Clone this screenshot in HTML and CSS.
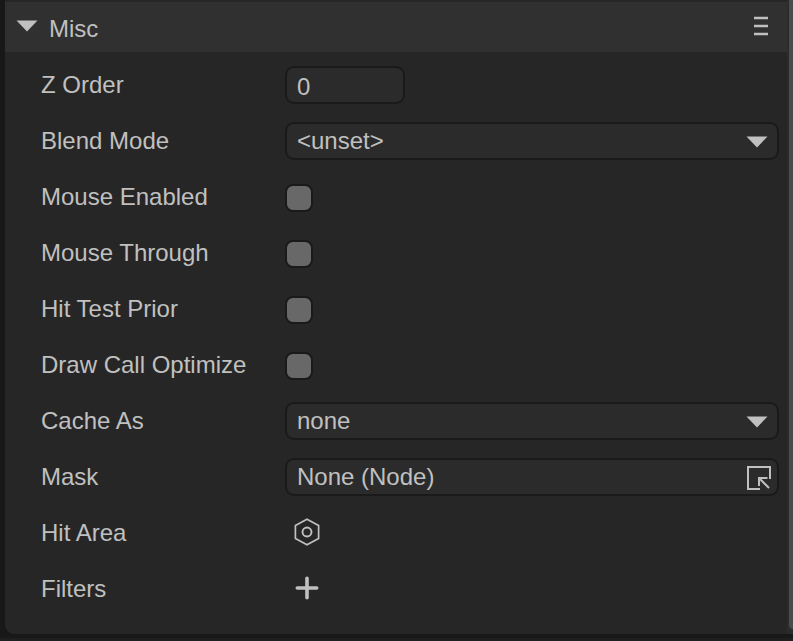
FILE: index.html
```html
<!DOCTYPE html>
<html lang="en">
<head>
<meta charset="utf-8">
<title>Misc</title>
<link rel="stylesheet" href="styles.css">
</head>
<body>
<div class="inspector">
  <main class="panel">
    <header class="panel-header">
      <button class="toggle" type="button" aria-expanded="true">
        <svg class="caret" width="22" height="12" viewBox="0 0 22 12" aria-hidden="true"><path d="M0.5 0.5H21.5L11 11.5Z"/></svg>
        <span class="title">Misc</span>
      </button>
      <button class="icon-button" type="button" aria-label="Menu">
        <svg width="16" height="20" viewBox="0 0 16 20" aria-hidden="true"><path class="line" stroke-width="2.4" d="M1 2H15M1 10H15M1 18H15"/></svg>
      </button>
    </header>
    <form class="rows">
      <div class="row">
        <label for="z-order">Z Order</label>
        <input class="field number" id="z-order" type="text" inputmode="numeric" value="0">
      </div>
      <div class="row">
        <label for="blend-mode">Blend Mode</label>
        <div class="select">
          <select class="field" id="blend-mode"><option>&lt;unset&gt;</option></select>
          <svg class="caret" width="22" height="12" viewBox="0 0 22 12" aria-hidden="true"><path d="M0.5 0.5H21.5L11 11.5Z"/></svg>
        </div>
      </div>
      <div class="row">
        <label for="mouse-enabled">Mouse Enabled</label>
        <input class="check" id="mouse-enabled" type="checkbox">
      </div>
      <div class="row">
        <label for="mouse-through">Mouse Through</label>
        <input class="check" id="mouse-through" type="checkbox">
      </div>
      <div class="row">
        <label for="hit-test-prior">Hit Test Prior</label>
        <input class="check" id="hit-test-prior" type="checkbox">
      </div>
      <div class="row">
        <label for="draw-call">Draw Call Optimize</label>
        <input class="check" id="draw-call" type="checkbox">
      </div>
      <div class="row">
        <label for="cache-as">Cache As</label>
        <div class="select">
          <select class="field" id="cache-as"><option>none</option></select>
          <svg class="caret" width="22" height="12" viewBox="0 0 22 12" aria-hidden="true"><path d="M0.5 0.5H21.5L11 11.5Z"/></svg>
        </div>
      </div>
      <div class="row">
        <label for="mask">Mask</label>
        <div class="field node-field">
          <input class="node-input" id="mask" type="text" value="None (Node)" readonly>
          <button class="icon-button" type="button" aria-label="Pick node">
            <svg width="26" height="26" viewBox="0 0 26 26" aria-hidden="true"><path class="line" stroke-width="2" d="M14 25H2V3H24V15M13 22V14H21.500M13 14L23 24"/></svg>
          </button>
        </div>
      </div>
      <div class="row">
        <label for="hit-area">Hit Area</label>
        <button class="icon-button action" id="hit-area" type="button">
          <svg width="28" height="28" viewBox="0 0 28 28" aria-hidden="true"><path class="line" stroke-width="1.700" d="M14 1.200L25.600 7.500V20.500L14 26.800L2.400 20.500V7.500Z"/><circle class="line" stroke-width="1.900" cx="14" cy="14" r="4.500"/></svg>
        </button>
      </div>
      <div class="row">
        <label for="filters">Filters</label>
        <button class="icon-button action" id="filters" type="button">
          <svg width="28" height="28" viewBox="0 0 28 28" aria-hidden="true"><path class="line" stroke-width="3.600" stroke-linecap="round" d="M14 4.300V23.700M4.300 14H23.700"/></svg>
        </button>
      </div>
    </form>
  </main>
  <div class="scroll-track"><div class="scroll-thumb"></div></div>
</div>
</body>
</html>
```
FILE: styles.css
```css
* {
  box-sizing: border-box;
}

body {
  margin: 0;
  background: #181818;
  color: #c0c0c0;
  font: 24px/28px "Liberation Sans", Arial, sans-serif;
}

.inspector {
  display: flex;
  min-height: 100vh;
  padding: 0 0 4px 5px;
  border-bottom: 3px solid #201e1e;
}

.panel {
  flex: 1;
  min-width: 0;
  padding: 2px 0 14px;
  background: #262626;
  border-bottom-left-radius: 9px;
}

.panel-header {
  display: flex;
  align-items: center;
  justify-content: space-between;
  height: 50px;
  padding: 0 18px 2px 11px;
  background: #303030;
}

button {
  display: flex;
  align-items: center;
  padding: 0;
  border: 0;
  background: none;
  color: inherit;
  font: inherit;
}

.toggle {
  gap: 11px;
}

.title {
  padding-top: 5px;
}

svg {
  display: block;
}

.caret {
  fill: #c0c0c0;
}

.line {
  fill: none;
  stroke: #c0c0c0;
}

.rows {
  padding: 5px 8px 0 36px;
}

.row {
  display: grid;
  grid-template-columns: 244px 1fr;
  align-items: center;
  height: 56px;
}

.field {
  width: 100%;
  height: 38px;
  margin: 0;
  padding: 0 10px;
  border: 2px solid #1a1a1a;
  border-radius: 9px;
  background: #2b2b2b;
  color: inherit;
  font: inherit;
  appearance: none;
}

.number {
  width: 120px;
  padding-top: 4px;
}

.select {
  position: relative;
}

.select select {
  display: block;
}

.select .caret {
  position: absolute;
  top: 14px;
  right: 11px;
  pointer-events: none;
}

.check {
  width: 28px;
  height: 28px;
  margin: 2px 0 0;
  border: 2px solid #1a1a1a;
  border-radius: 8px;
  background: #686868;
  appearance: none;
}

.node-field {
  display: flex;
  align-items: center;
  padding-right: 5px;
}

.node-input {
  flex: 1;
  min-width: 0;
  padding: 0;
  border: 0;
  background: none;
  color: inherit;
  font: inherit;
}

.action {
  justify-self: start;
  padding: 0 0 2px 8px;
}

.scroll-track {
  display: flex;
  width: 6px;
  padding: 0 0 5px 2px;
  background: #2b2b2b;
}

.scroll-thumb {
  flex: 1;
  background: #4b4b4b;
  border-bottom-left-radius: 4px;
}
```
